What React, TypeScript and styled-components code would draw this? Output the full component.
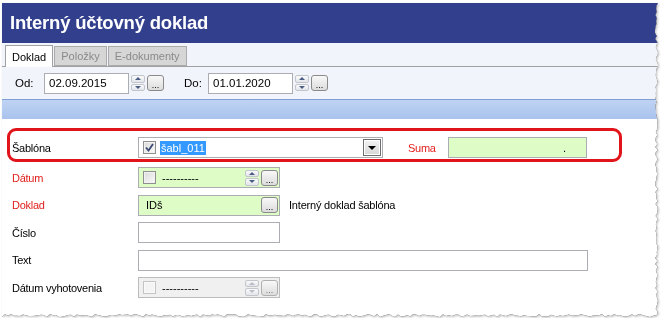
import styled, { createGlobalStyle } from 'styled-components';

const FRAME_W = 657;
const FRAME_H = 315;

// torn paper edge on the right and bottom (same every run)
const jitter = (i: number) => Math.abs(Math.sin(i * 12.9898) * 43758.5453) % 1;
const tornEdge = (() => {
  const pts: string[] = ['0px 0px'];
  for (let y = 0; y <= FRAME_H - 3; y += 3) {
    pts.push(`${(FRAME_W - 1 - jitter(y) * 3).toFixed(1)}px ${y}px`);
  }
  for (let x = FRAME_W - 3; x >= 0; x -= 3) {
    pts.push(`${x}px ${(FRAME_H - 1 - jitter(x + 777) * 3).toFixed(1)}px`);
  }
  pts.push(`0px ${FRAME_H}px`);
  return `polygon(${pts.join(', ')})`;
})();

const GlobalStyle = createGlobalStyle`
  html, body {
    margin: 0;
    padding: 0;
    background: #fff;
  }
  body {
    font-family: 'Liberation Sans', Arial, sans-serif;
    font-size: 11px;
    color: #000;
  }
`;

const Shadow = styled.div`
  padding: 3px 0 0 2px;
  width: fit-content;
  filter: drop-shadow(0 0 0.6px rgba(0, 0, 0, 0.85)) drop-shadow(1px 1px 1px rgba(0, 0, 0, 0.25));
`;

const Frame = styled.div`
  width: ${FRAME_W}px;
  height: ${FRAME_H}px;
  display: flex;
  flex-direction: column;
  background: #fff;
  clip-path: ${tornEdge};
`;

const TitleBar = styled.div`
  height: 40px;
  flex-shrink: 0;
  display: flex;
  align-items: center;
  padding-left: 8px;
  background: #323f8d;
  color: #fff;
  font-size: 18.5px;
  font-weight: bold;
  letter-spacing: -0.2px;
`;

const TabStrip = styled.div`
  height: 23px;
  flex-shrink: 0;
  display: flex;
  align-items: flex-end;
  padding-left: 3px;
  background: #f1f4fa;
  border-bottom: 1px solid #a0a0a0;
`;

const Tab = styled.div<{ $active?: boolean }>`
  height: ${(p) => (p.$active ? 22 : 20)}px;
  box-sizing: border-box;
  display: flex;
  align-items: center;
  padding: 0 6px;
  margin-right: 1px;
  margin-bottom: ${(p) => (p.$active ? -1 : 0)}px;
  font-size: 11px;
  color: ${(p) => (p.$active ? '#000' : '#8a8a8a')};
  background: ${(p) => (p.$active ? '#fff' : '#d6d6d6')};
  border: 1px solid ${(p) => (p.$active ? '#a0a0a0' : '#ababab')};
  border-bottom: ${(p) => (p.$active ? 'none' : '1px solid #ababab')};
`;

const Toolbar = styled.div`
  height: 32px;
  flex-shrink: 0;
  display: flex;
  align-items: center;
  padding-left: 13px;
  background: #f1f4fa;
`;

const ToolLabel = styled.span<{ $w: number; $gap?: number }>`
  width: ${(p) => p.$w}px;
  margin-left: ${(p) => p.$gap ?? 0}px;
  font-size: 11.5px;
`;

const DateInput = styled.div`
  width: 85px;
  height: 21px;
  box-sizing: border-box;
  display: flex;
  align-items: center;
  padding-left: 4px;
  border: 1px solid #abadb3;
  background: #fff;
  font-size: 11.5px;
`;

const Band = styled.div`
  height: 20px;
  flex-shrink: 0;
  box-sizing: border-box;
  border-top: 1px solid #7f9fd3;
  background: linear-gradient(#bfd3f3, #a9c3ed);
`;

const Form = styled.div`
  flex: 1;
  display: flex;
  flex-direction: column;
  padding: 9px 0 0 5px;
`;

const HighlightBox = styled.div`
  width: 615px;
  height: 34px;
  box-sizing: border-box;
  padding: 6px 0 0 2px;
  border: 3px solid #e2141b;
  border-radius: 9px;
`;

const Rows = styled.div`
  display: flex;
  flex-direction: column;
  gap: 6.5px;
  margin-top: 5px;
  padding-left: 5px;
`;

const Row = styled.div`
  height: 21px;
  display: flex;
  align-items: center;
`;

const Label = styled.span<{ $required?: boolean; $w?: number; $gap?: number }>`
  width: ${(p) => p.$w ?? 126}px;
  margin-left: ${(p) => p.$gap ?? 0}px;
  flex-shrink: 0;
  letter-spacing: -0.25px;
  color: ${(p) => (p.$required ? '#e2201d' : '#000')};
`;

const Field = styled.div<{ $w: number; $tone?: 'white' | 'green' | 'disabled'; $end?: boolean }>`
  width: ${(p) => p.$w}px;
  height: 21px;
  box-sizing: border-box;
  display: flex;
  align-items: center;
  justify-content: ${(p) => (p.$end ? 'flex-end' : 'flex-start')};
  padding: 0 ${(p) => (p.$end ? 20 : 1)}px 0 4px;
  border: 1px solid ${(p) => (p.$tone === 'disabled' ? '#bcbcbc' : '#abadb3')};
  background: ${(p) =>
    p.$tone === 'green' ? '#ddfcc6' : p.$tone === 'disabled' ? '#f0f0f0' : '#fff'};
`;

const FieldText = styled.span<{ $pad?: number }>`
  flex: 1;
  padding-left: ${(p) => p.$pad ?? 6}px;
  white-space: nowrap;
`;

const Selected = styled.span`
  background: #3399ff;
  color: #fff;
  padding: 1px 1px;
`;

const Note = styled.span`
  margin-left: 9px;
  letter-spacing: -0.2px;
`;

const Spinner = styled.div`
  width: 14px;
  height: 16px;
  margin-left: 2px;
  display: flex;
  flex-direction: column;
  gap: 1px;
  flex-shrink: 0;
`;

const SpinHalf = styled.div<{ $down?: boolean; $disabled?: boolean }>`
  flex: 1;
  box-sizing: border-box;
  display: flex;
  align-items: center;
  justify-content: center;
  border: 1px solid #c2c6cc;
  border-radius: 2px;
  background: linear-gradient(#fbfbfb, #e2e5ea);

  &::after {
    content: '';
    border-left: 3px solid transparent;
    border-right: 3px solid transparent;
    ${(p) => (p.$down ? 'border-top' : 'border-bottom')}: 3px solid
      ${(p) => (p.$disabled ? '#b8bcc4' : '#4a5d82')};
  }
`;

const DotsButton = styled.div<{ $disabled?: boolean }>`
  width: 17px;
  height: 16px;
  margin-left: 2px;
  flex-shrink: 0;
  box-sizing: border-box;
  display: flex;
  align-items: flex-end;
  justify-content: center;
  padding-bottom: 2px;
  border: 1px solid ${(p) => (p.$disabled ? '#b0b0b0' : '#8a8a8a')};
  border-radius: 3px;
  background: linear-gradient(#f8f8f8, #dcdcdc);
  font-size: 9px;
  line-height: 6px;
  color: ${(p) => (p.$disabled ? '#777' : '#000')};
`;

const DropButton = styled.div`
  width: 18px;
  height: 17px;
  margin-left: auto;
  box-sizing: border-box;
  display: flex;
  align-items: center;
  justify-content: center;
  border: 1px solid #6d6d6d;
  box-shadow: inset 0 0 0 1px #fff;
  background: linear-gradient(#f3f3f3, #d6d6d6);

  &::after {
    content: '';
    border-left: 4px solid transparent;
    border-right: 4px solid transparent;
    border-top: 4px solid #000;
  }
`;

const CheckBox = styled.span<{ $disabled?: boolean }>`
  width: 13px;
  height: 13px;
  flex-shrink: 0;
  box-sizing: border-box;
  display: flex;
  align-items: center;
  justify-content: center;
  border: 1px solid ${(p) => (p.$disabled ? '#c4c4c4' : '#8e8f8f')};
  background: ${(p) =>
    p.$disabled ? '#f4f4f4' : 'linear-gradient(135deg, #d9d9d9, #fbfbfb)'};
  box-shadow: inset 0 0 0 1px ${(p) => (p.$disabled ? '#fafafa' : '#f2f2f2')};
`;

const Dashes = '----------';

const Check = () => (
  <svg width="9" height="9" viewBox="0 0 9 9">
    <path d="M1 4.5 L3.5 7.5 L8 1" fill="none" stroke="#3b4a72" strokeWidth="1.8" />
  </svg>
);

const SpinPair = ({ disabled }: { disabled?: boolean }) => (
  <Spinner>
    <SpinHalf $disabled={disabled} />
    <SpinHalf $down $disabled={disabled} />
  </Spinner>
);

const App = () => (
  <>
    <GlobalStyle />
    <Shadow>
      <Frame>
        <TitleBar>Interný účtovný doklad</TitleBar>
        <TabStrip>
          <Tab $active>Doklad</Tab>
          <Tab>Položky</Tab>
          <Tab>E-dokumenty</Tab>
        </TabStrip>
        <Toolbar>
          <ToolLabel $w={29}>Od:</ToolLabel>
          <DateInput>02.09.2015</DateInput>
          <SpinPair />
          <DotsButton>...</DotsButton>
          <ToolLabel $w={24} $gap={20}>Do:</ToolLabel>
          <DateInput>01.01.2020</DateInput>
          <SpinPair />
          <DotsButton>...</DotsButton>
        </Toolbar>
        <Band />
        <Form>
          <HighlightBox>
            <Row>
              <Label>Šablóna</Label>
              <Field $w={245}>
                <CheckBox>
                  <Check />
                </CheckBox>
                <FieldText $pad={4}>
                  <Selected>šabl_011</Selected>
                </FieldText>
                <DropButton />
              </Field>
              <Label $required $w={40} $gap={25}>
                Suma
              </Label>
              <Field $w={139} $tone="green" $end>
                .
              </Field>
            </Row>
          </HighlightBox>
          <Rows>
            <Row>
              <Label $required>Dátum</Label>
              <Field $w={142} $tone="green">
                <CheckBox />
                <FieldText>{Dashes}</FieldText>
                <SpinPair />
                <DotsButton>...</DotsButton>
              </Field>
            </Row>
            <Row>
              <Label $required>Doklad</Label>
              <Field $w={142} $tone="green">
                <FieldText $pad={3}>IDš</FieldText>
                <DotsButton>...</DotsButton>
              </Field>
              <Note>Interný doklad šablóna</Note>
            </Row>
            <Row>
              <Label>Číslo</Label>
              <Field $w={142} />
            </Row>
            <Row>
              <Label>Text</Label>
              <Field $w={450} />
            </Row>
            <Row>
              <Label>Dátum vyhotovenia</Label>
              <Field $w={142} $tone="disabled">
                <CheckBox $disabled />
                <FieldText>{Dashes}</FieldText>
                <SpinPair disabled />
                <DotsButton $disabled>...</DotsButton>
              </Field>
            </Row>
          </Rows>
        </Form>
      </Frame>
    </Shadow>
  </>
);

export default App;
